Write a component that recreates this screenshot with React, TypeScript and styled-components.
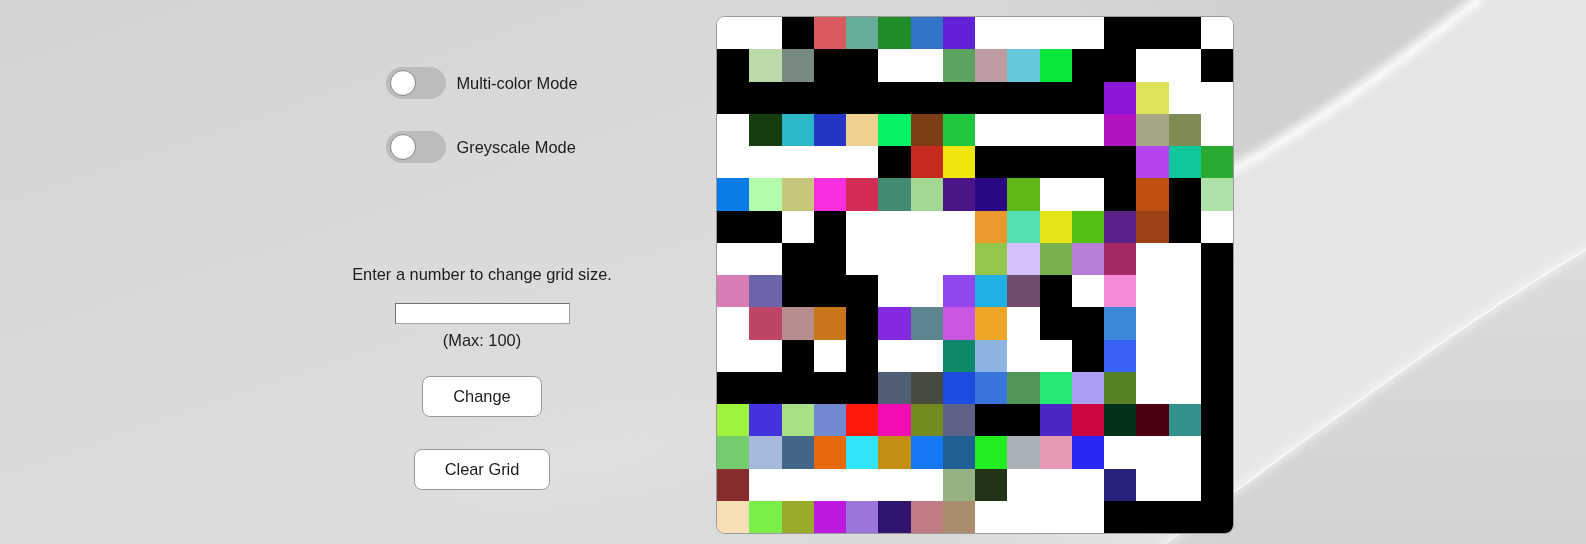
import React from 'react';
import styled, { createGlobalStyle } from 'styled-components';

const GlobalStyle = createGlobalStyle`
  html, body {
    margin: 0;
    padding: 0;
    background: #dadadb;
  }
  body {
    font-family: 'Liberation Sans', Arial, sans-serif;
    color: #1c1c1c;
    overflow: hidden;
  }
`;

const w = '#ffffff';
const k = '#000000';

// sketch grid state, 16 x 16
const ROWS: string[][] = [
  [w, w, k, '#d95b5f', '#68ad9a', '#1e8c28', '#3274c8', '#6320d8', w, w, w, w, k, k, k, w],
  [k, '#bcdaa8', '#778a7e', k, k, w, w, '#5ba35f', '#bd9ba0', '#68c9dc', '#07e83a', k, k, w, w, k],
  [k, k, k, k, k, k, k, k, k, k, k, k, '#8a17d8', '#dde356', w, w],
  [w, '#143d10', '#2ab7c6', '#2336c6', '#efd08e', '#05f265', '#7b3e15', '#1ec73e', w, w, w, w, '#b115bf', '#a6a584', '#7e8d54', w],
  [w, w, w, w, w, k, '#c72a1f', '#f0e60b', k, k, k, k, k, '#b444ed', '#0ec79a', '#28ab30'],
  ['#0a7ce8', '#b4fcad', '#c8c67a', '#f82ee0', '#d32d56', '#458a74', '#a2d794', '#4b1585', '#2b0884', '#60b718', w, w, k, '#c04f12', k, '#aee2a8'],
  [k, k, w, k, w, w, w, w, '#ea9a2a', '#56e0b1', '#e6e518', '#53bf10', '#5c2089', '#9d4117', k, w],
  [w, w, k, k, w, w, w, w, '#93c64a', '#d5c0fb', '#7aaf4d', '#b87dd6', '#a32a63', w, w, k],
  ['#d87cb4', '#6a64a8', k, k, k, w, w, '#9248ec', '#1fb0e4', '#6f4c6e', k, w, '#f58bd8', w, w, k],
  [w, '#bf4566', '#b88b8c', '#c8761a', k, '#8429e0', '#5b8690', '#c957e0', '#eea726', w, k, k, '#3e88da', w, w, k],
  [w, w, k, w, k, w, w, '#0e8a6a', '#8cb5e4', w, w, k, '#3b62f6', w, w, k],
  [k, k, k, k, k, '#505e74', '#464b40', '#1c4ce0', '#3774dc', '#539458', '#27e872', '#ab9ef5', '#588324', w, w, k],
  ['#9ef43c', '#4532df', '#a7e085', '#7089d0', '#fb1a0b', '#f20cb4', '#738c1f', '#5e6187', k, k, '#4d25c4', '#cc0841', '#02321a', '#4c000f', '#33938c', k],
  ['#73cc6e', '#a7b8dd', '#44658a', '#e8690c', '#31e4f8', '#c38f12', '#1477f4', '#1f5f94', '#22ed22', '#aab0b8', '#e89ab5', '#2828f5', w, w, w, k],
  ['#872d2d', w, w, w, w, w, w, '#95b283', '#223417', w, w, w, '#27237a', w, w, k],
  ['#f7e0b6', '#7aef4a', '#9aab2c', '#be1adf', '#9b76d9', '#31146f', '#c07c83', '#ab8d6d', w, w, w, w, k, k, k, k],
];

const Backdrop = styled.svg`
  position: fixed;
  inset: 0;
  width: 100%;
  height: 100%;
  z-index: 0;
`;

const Page = styled.main`
  position: relative;
  z-index: 1;
  display: flex;
  justify-content: center;
  align-items: flex-start;
  gap: 104px;
  padding-top: 16px;
  height: 544px;
  box-sizing: border-box;
`;

const Controls = styled.section`
  width: 260px;
  margin-top: 51px;
  display: flex;
  flex-direction: column;
  align-items: center;
`;

const ToggleGroup = styled.div`
  display: flex;
  flex-direction: column;
  align-items: flex-start;
  gap: 32px;
`;

const ToggleRow = styled.label`
  display: flex;
  align-items: center;
  gap: 10px;
  height: 32px;
  font-size: 16.4px;
  cursor: pointer;
`;

const Track = styled.span<{ $on: boolean }>`
  display: flex;
  align-items: center;
  justify-content: ${(p) => (p.$on ? 'flex-end' : 'flex-start')};
  width: 60px;
  height: 32px;
  padding: 0 4px;
  box-sizing: border-box;
  border-radius: 16px;
  background: ${(p) => (p.$on ? '#5aa0e6' : '#bcbcbc')};
`;

const Knob = styled.span`
  width: 26px;
  height: 26px;
  border-radius: 50%;
  box-sizing: border-box;
  border: 1.5px solid #8a8a8a;
  background: radial-gradient(circle at 45% 40%, #ffffff 55%, #e9e9e9 100%);
`;

const Prompt = styled.p`
  margin: 102px 0 0;
  font-size: 16.4px;
  line-height: 19px;
  white-space: nowrap;
`;

const SizeInput = styled.input`
  margin-top: 19px;
  width: 175px;
  height: 21px;
  box-sizing: border-box;
  border: 1px solid #a0a0a0;
  border-top-color: #707070;
  border-left-color: #707070;
  background: #fff;
  font-family: inherit;
  font-size: 14px;
  padding: 0 3px;
`;

const Hint = styled.span`
  margin-top: 7px;
  font-size: 16.4px;
  line-height: 19px;
`;

const Button = styled.button<{ $gap: number }>`
  margin-top: ${(p) => p.$gap}px;
  padding: 10px 30px;
  background: #fff;
  border: 1px solid #9a9a9a;
  border-radius: 8px;
  font-family: inherit;
  font-size: 16.4px;
  line-height: 19px;
  color: #1c1c1c;
  cursor: pointer;
`;

const Board = styled.div`
  display: grid;
  grid-template-columns: repeat(16, 1fr);
  grid-template-rows: repeat(16, 1fr);
  width: 516px;
  height: 516px;
  border: 1px solid #9a9a9a;
  border-radius: 9px;
  overflow: hidden;
  background: #fff;
`;

const Cell = styled.div<{ $color: string }>`
  background: ${(p) => p.$color};
`;

const Toggle = ({ label }: { label: string }) => {
  const [on, setOn] = React.useState(false);
  return (
    <ToggleRow onClick={() => setOn(!on)}>
      <Track $on={on}>
        <Knob />
      </Track>
      {label}
    </ToggleRow>
  );
};

const UPPER = 'M1482,-4 C1420,45 1330,115 1237,167 C1120,230 1020,270 900,320';
const LOWER = 'M1592,246 C1500,300 1400,370 1237,490 C1210,510 1190,525 1160,548';

const Background = () => (
  <Backdrop viewBox="0 0 1586 544" preserveAspectRatio="none">
    <defs>
      <linearGradient id="base" x1="0" y1="0" x2="1" y2="1">
        <stop offset="0" stopColor="#d4d4d5" />
        <stop offset="0.5" stopColor="#dcdcdd" />
        <stop offset="1" stopColor="#dadadb" />
      </linearGradient>
      <linearGradient id="band" x1="0" y1="0" x2="1" y2="1">
        <stop offset="0" stopColor="#e3e3e4" />
        <stop offset="1" stopColor="#e8e8e9" />
      </linearGradient>
      <linearGradient id="corner" x1="0" y1="0" x2="0" y2="1">
        <stop offset="0" stopColor="#dcdcde" />
        <stop offset="1" stopColor="#d2d2d4" />
      </linearGradient>
      <linearGradient id="fade" x1="950" y1="0" x2="1236" y2="0" gradientUnits="userSpaceOnUse">
        <stop offset="0" stopColor="#000" />
        <stop offset="1" stopColor="#fff" />
      </linearGradient>
      <mask id="rightSide">
        <rect width="1586" height="544" fill="url(#fade)" />
      </mask>
      <filter id="glow" x="-10%" y="-10%" width="120%" height="120%">
        <feGaussianBlur stdDeviation="4" />
      </filter>
      <filter id="soft" x="-50%" y="-50%" width="200%" height="200%">
        <feGaussianBlur stdDeviation="30" />
      </filter>
    </defs>
    <rect width="1586" height="544" fill="url(#base)" />
    <ellipse cx="600" cy="455" rx="170" ry="28" fill="#e4e4e5" opacity="0.7" filter="url(#soft)" transform="rotate(-10 600 455)" />
    <g mask="url(#rightSide)">
      <path d={`M880,-4 L1482,-4 C1420,45 1330,115 1237,167 C1120,230 1020,270 880,326 Z`} fill="#d0d0d2" />
      <path d={`${UPPER} L880,548 L1160,548 C1190,525 1210,510 1237,490 C1400,370 1500,300 1592,246 L1592,-4 Z`} fill="url(#band)" />
      <path d={`${LOWER} L1592,548 Z`} fill="url(#corner)" />
      <path d={UPPER} stroke="#ffffff" strokeWidth="10" fill="none" filter="url(#glow)" opacity="0.9" />
      <path d={UPPER} stroke="#f6f6f6" strokeWidth="2" fill="none" opacity="0.8" />
      <path d={LOWER} stroke="#ffffff" strokeWidth="4" fill="none" filter="url(#glow)" />
      <path d={LOWER} stroke="#fafafa" strokeWidth="1.5" fill="none" />
    </g>
  </Backdrop>
);

export default function App() {
  return (
    <>
      <GlobalStyle />
      <Background />
      <Page>
        <Controls>
          <ToggleGroup>
            <Toggle label="Multi-color Mode" />
            <Toggle label="Greyscale Mode" />
          </ToggleGroup>
          <Prompt>Enter a number to change grid size.</Prompt>
          <SizeInput type="text" />
          <Hint>(Max: 100)</Hint>
          <Button $gap={26}>Change</Button>
          <Button $gap={32}>Clear Grid</Button>
        </Controls>
        <Board>
          {ROWS.map((row, r) =>
            row.map((color, c) => <Cell key={`${r}-${c}`} $color={color} />)
          )}
        </Board>
      </Page>
    </>
  );
}
